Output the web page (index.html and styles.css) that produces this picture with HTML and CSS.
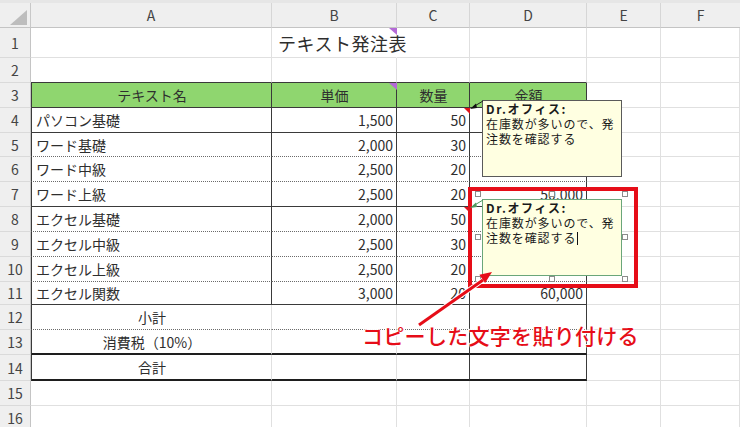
FILE: index.html
```html
<!DOCTYPE html>
<html lang="ja">
<head>
<meta charset="utf-8">
<title>テキスト発注表</title>
<link rel="stylesheet" href="styles.css">
</head>
<body>
<div class="sheet">
  <div class="grid">
    <div class="corner"><svg class="corner-tri" width="31" height="25" viewBox="0 0 31 25"><polygon points="10,22 27,22 27,7" fill="#bdbdbd"/></svg></div>
    <div class="ch">A</div><div class="ch">B</div><div class="ch">C</div><div class="ch">D</div><div class="ch">E</div><div class="ch ch-last">F</div>

    <div class="rh">1</div>
    <div class="c"></div><div class="c title nor">テキスト発注表</div><div class="c"></div><div class="c"></div><div class="c"></div><div class="c"></div>

    <div class="rh">2</div>
    <div class="c B"></div><div class="c B"></div><div class="c B"></div><div class="c B"></div><div class="c"></div><div class="c"></div>

    <div class="rh">3</div>
    <div class="c g L R B m">テキスト名</div><div class="c g R B m">単価</div><div class="c g R B m">数量</div><div class="c g R B m">金額</div><div class="c"></div><div class="c"></div>

    <div class="rh">4</div>
    <div class="c L R B">パソコン基礎</div><div class="c R B r">1,500</div><div class="c R B r">50</div><div class="c R B r"></div><div class="c"></div><div class="c"></div>

    <div class="rh">5</div>
    <div class="c L R Bd">ワード基礎</div><div class="c R Bd r">2,000</div><div class="c R Bd r">30</div><div class="c R Bd r"></div><div class="c"></div><div class="c"></div>

    <div class="rh">6</div>
    <div class="c L R Bd">ワード中級</div><div class="c R Bd r">2,500</div><div class="c R Bd r">20</div><div class="c R Bd r"></div><div class="c"></div><div class="c"></div>

    <div class="rh">7</div>
    <div class="c L R B">ワード上級</div><div class="c R B r">2,500</div><div class="c R B r">20</div><div class="c R B r">50,000</div><div class="c"></div><div class="c"></div>

    <div class="rh">8</div>
    <div class="c L R Bd">エクセル基礎</div><div class="c R Bd r">2,000</div><div class="c R Bd r">50</div><div class="c R Bd r"></div><div class="c"></div><div class="c"></div>

    <div class="rh">9</div>
    <div class="c L R Bd">エクセル中級</div><div class="c R Bd r">2,500</div><div class="c R Bd r">30</div><div class="c R Bd r"></div><div class="c"></div><div class="c"></div>

    <div class="rh">10</div>
    <div class="c L R Bd">エクセル上級</div><div class="c R Bd r">2,500</div><div class="c R Bd r">20</div><div class="c R Bd r"></div><div class="c"></div><div class="c"></div>

    <div class="rh">11</div>
    <div class="c L R B">エクセル関数</div><div class="c R B r">3,000</div><div class="c R B r">20</div><div class="c R B r">60,000</div><div class="c"></div><div class="c"></div>

    <div class="rh">12</div>
    <div class="c L Bd m">小計</div><div class="c Bd"></div><div class="c R Bd"></div><div class="c R Bd"></div><div class="c"></div><div class="c"></div>

    <div class="rh">13</div>
    <div class="c L B2 m">消費税（10%）</div><div class="c B2"></div><div class="c R B2"></div><div class="c R B2"></div><div class="c"></div><div class="c"></div>

    <div class="rh">14</div>
    <div class="c L B2 m">合計</div><div class="c B2"></div><div class="c R B2"></div><div class="c R B2"></div><div class="c"></div><div class="c"></div>

    <div class="rh">15</div>
    <div class="c"></div><div class="c"></div><div class="c"></div><div class="c"></div><div class="c"></div><div class="c"></div>

    <div class="rh">16</div>
    <div class="c"></div><div class="c"></div><div class="c"></div><div class="c"></div><div class="c"></div><div class="c"></div>
  </div>

  <div class="note note1"><b class="who">Dr.オフィス:</b><br>在庫数が多いので、発<br>注数を確認する</div>
  <div class="note note2"><b class="who">Dr.オフィス:</b><br>在庫数が多いので、発<br>注数を確認する<span class="caret"></span></div>

  <div class="handle h1"></div><div class="handle h2"></div><div class="handle h3"></div>
  <div class="handle h4"></div><div class="handle h5"></div>
  <div class="handle h6"></div><div class="handle h7"></div><div class="handle h8"></div>

  <div class="redbox"></div>

  <svg class="overlay" width="740" height="427" viewBox="0 0 740 427">
    <polygon points="389,28 397,28 397,35" fill="#b46ad6"/>
    <polygon points="389,83 397,83 397,90" fill="#b46ad6"/>
    <polygon points="464,108 470,108 470,114" fill="#e0141c"/>
    <polygon points="464,207 470,207 470,213" fill="#e0141c"/>
    <line x1="483" y1="101" x2="473" y2="107" stroke="#222" stroke-width="1"/>
    <polygon points="470,109 476,103.5 477,108" fill="#111"/>
    <line x1="483" y1="200" x2="473" y2="206" stroke="#4f9a5f" stroke-width="1"/>
    <polygon points="470,208 476,202.5 477,207" fill="#4f9a5f"/>
    <line x1="419" y1="325" x2="483" y2="280" stroke="#fff" stroke-width="5" stroke-linecap="round"/>
    <line x1="419" y1="325" x2="483" y2="280" stroke="#e60d18" stroke-width="3"/>
    <polygon points="492,272 485.1,283 479.3,274.8" fill="#e60d18"/>
  </svg>

  <div class="callout">コピーした文字を貼り付ける</div>
</div>
</body>
</html>
```

FILE: styles.css
```css
html, body {
  margin: 0;
  padding: 0;
  background: #ffffff;
}

body {
  font-family: "Noto Sans CJK JP", "Noto Sans", sans-serif;
  color: #333333;
  width: 740px;
  height: 427px;
  overflow: hidden;
}

.sheet {
  position: relative;
  width: 740px;
  height: 427px;
  overflow: hidden;
  border-top: 3px solid #e6e6e6;
  box-sizing: border-box;
}

.grid {
  display: grid;
  grid-template-columns: 31px 241px 125px 73px 117px 74px 79px;
  grid-template-rows: 25px 30px 25px 25px 25px 24px 25px 25px 25px 25px 25px 23px 25px 25px 26px 25px 25px;
}

.grid > div {
  box-sizing: border-box;
  min-width: 0;
}

.corner {
  background: #efefef;
  border-right: 1px solid #c8c8c8;
  border-bottom: 1px solid #c4c4c4;
  position: relative;
}

.corner-tri {
  display: block;
}

.ch {
  background: #efefef;
  border-right: 1px solid #d6d6d6;
  border-bottom: 1px solid #c4c4c4;
  display: flex;
  align-items: center;
  justify-content: center;
  font-size: 14px;
  color: #444444;
}

.ch-last {
  border-right: none;
}

.rh {
  background: #efefef;
  border-right: 1px solid #c4c4c4;
  border-bottom: 1px solid #dadada;
  display: flex;
  align-items: center;
  justify-content: center;
  font-size: 14px;
  color: #444444;
}

.c {
  border-right: 1px solid #e0e0e0;
  border-bottom: 1px solid #e0e0e0;
  display: flex;
  align-items: center;
  padding: 0 3px 0 4px;
  font-size: 14px;
  white-space: nowrap;
  overflow: visible;
  color: #2e2e2e;
}

.title {
  font-size: 18px;
  letter-spacing: 0.5px;
  padding-left: 6px;
  padding-top: 1px;
  position: relative;
  z-index: 1;
}

.nor {
  border-right-color: transparent;
}

.g { background: #8fd66f; }
.m { justify-content: center; }
.r { justify-content: flex-end; }
.L { border-left: 1px solid #3a3a3a; }
.R { border-right: 1px solid #3a3a3a; }
.B { border-bottom: 1px solid #3a3a3a; }
.Bd { border-bottom: 1px dotted #6a6a6a; }
.B2 { border-bottom: 2px solid #1e1e1e; }

.note {
  position: absolute;
  left: 482px;
  width: 140px;
  box-sizing: border-box;
  background: #ffffe1;
  font-size: 12px;
  line-height: 15px;
  letter-spacing: 0.9px;
  padding: 0 0 0 3px;
  color: #1a1a1a;
  z-index: 3;
}

.note1 {
  top: 97px;
  height: 77px;
  border: 1px solid #5a5a5a;
}

.note2 {
  top: 196px;
  height: 77px;
  border: 1px solid #6aa67a;
}

.who {
  font-weight: 700;
  letter-spacing: 1.6px;
}

.caret {
  display: inline-block;
  width: 0;
  height: 13px;
  border-left: 1px solid #111;
  vertical-align: -2px;
  margin-left: 1px;
}

.handle {
  position: absolute;
  width: 6px;
  height: 6px;
  box-sizing: border-box;
  background: #ffffff;
  border: 1px solid #8c8c8c;
  z-index: 4;
}

.h1 { left: 475px; top: 188px; }
.h2 { left: 549px; top: 188px; }
.h3 { left: 622px; top: 188px; }
.h4 { left: 475px; top: 231px; }
.h5 { left: 622px; top: 231px; }
.h6 { left: 475px; top: 273px; }
.h7 { left: 549px; top: 273px; }
.h8 { left: 622px; top: 273px; }

.redbox {
  position: absolute;
  left: 468px;
  top: 184px;
  width: 170px;
  height: 101px;
  box-sizing: border-box;
  border: 4px solid #e60d18;
  z-index: 5;
}

.overlay {
  position: absolute;
  left: 0;
  top: -3px;
  z-index: 6;
}

.callout {
  position: absolute;
  left: 362px;
  top: 322px;
  font-size: 21px;
  line-height: 21px;
  letter-spacing: 0.3px;
  font-weight: 500;
  color: #e60d18;
  white-space: nowrap;
  z-index: 7;
  text-shadow: 0 0 2px #ffffff, 0 0 2px #ffffff, 1px 1px 1px #ffffff, -1px -1px 1px #ffffff;
}
```
